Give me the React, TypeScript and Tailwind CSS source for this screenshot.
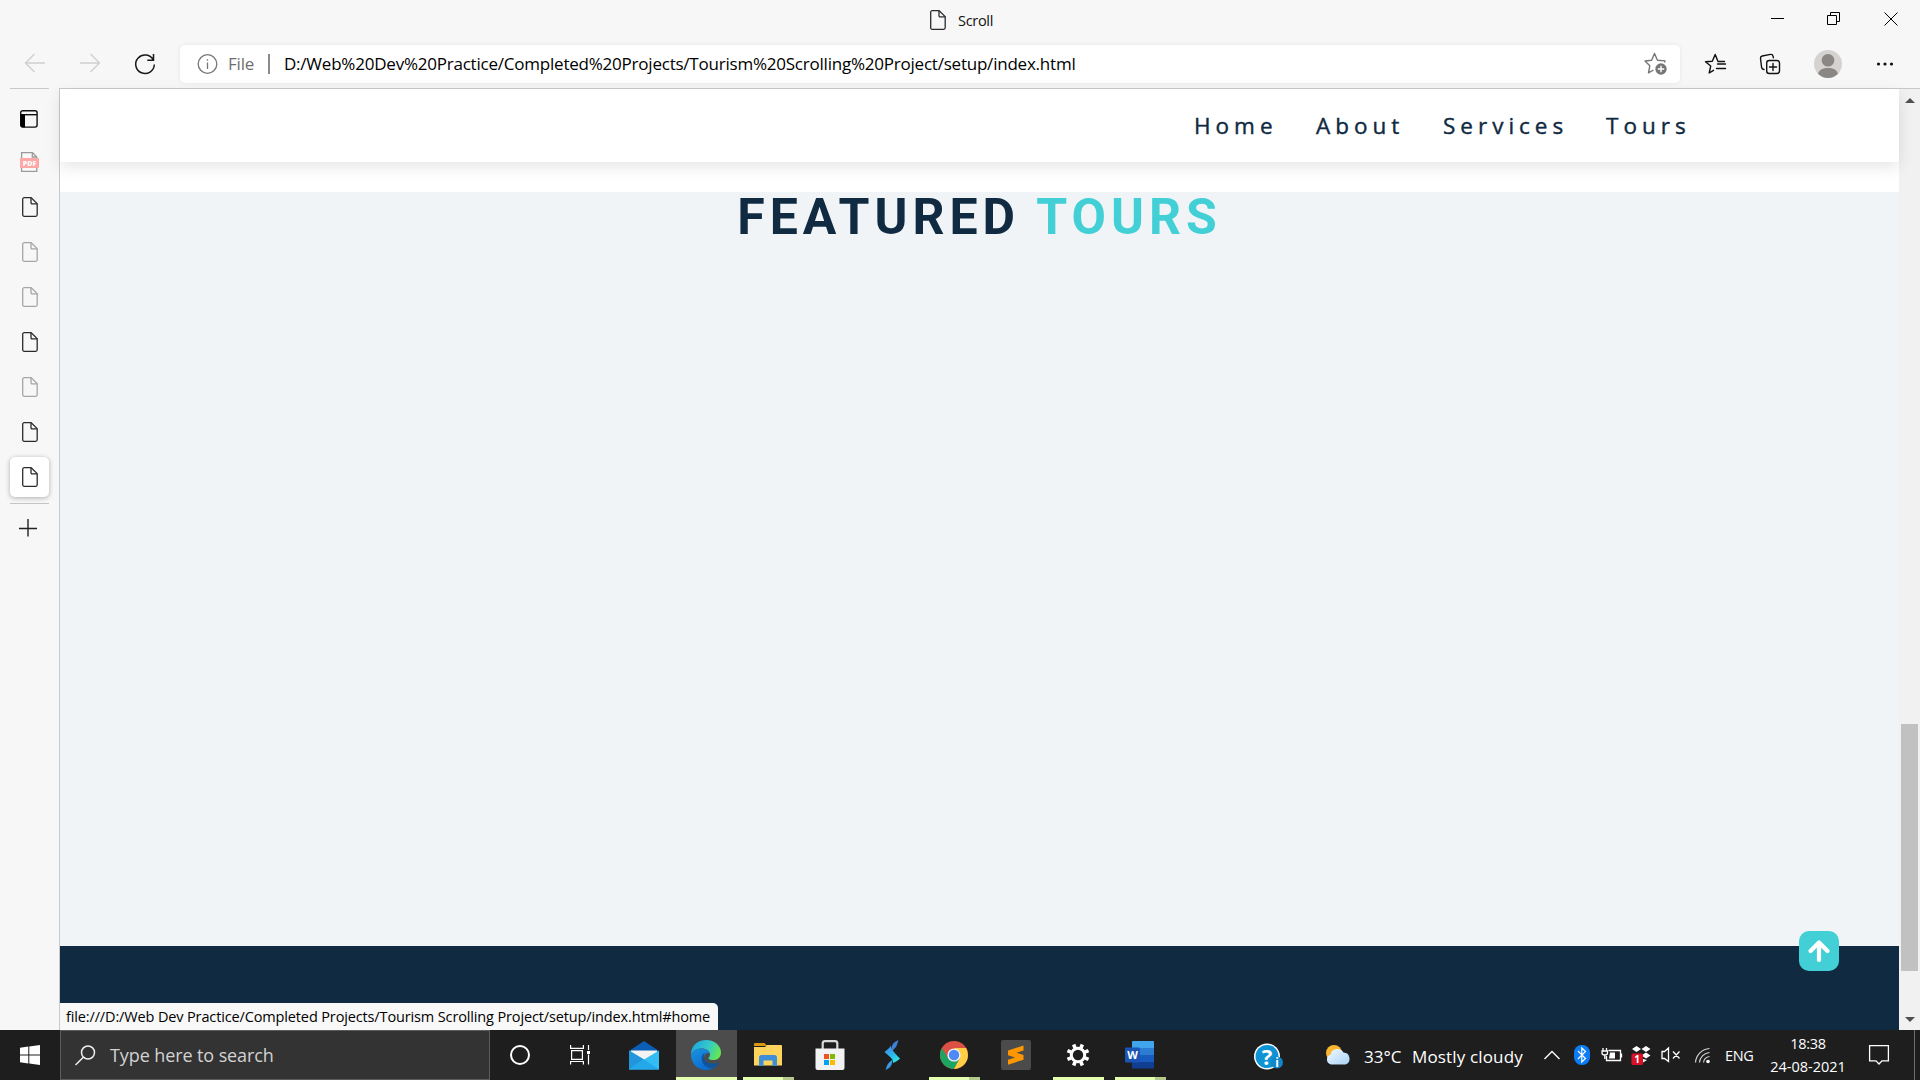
import type { ReactNode } from 'react';

function DocIcon({ faded = false, className = '' }: { faded?: boolean; className?: string }) {
  return (
    <svg className={className} width="16" height="20" viewBox="0 0 16 20" fill="none" stroke={faded ? '#a6a6a6' : '#2b2b2b'} strokeWidth="1.3" strokeLinejoin="round">
      <path d="M2.2 0.7H9.2L15.2 6.6V17.8A1.5 1.5 0 0 1 13.7 19.3H2.2A1.5 1.5 0 0 1 0.7 17.8V2.2A1.5 1.5 0 0 1 2.2 0.7Z" />
      <path d="M9 0.9V5.6A1.1 1.1 0 0 0 10.1 6.8H15.2" />
    </svg>
  );
}

function PdfIcon() {
  return (
    <svg width="19" height="20" viewBox="0 0 19 20" fill="none">
      <path d="M1.6 0.7H12.5L16.8 5V19.3H1.6Z" fill="#fafafa" stroke="#9a9a9a" strokeWidth="1.3" />
      <path d="M12.3 0.7V5H16.8" stroke="#9a9a9a" strokeWidth="1.3" />
      <rect x="0" y="6" width="19" height="10" rx="0.8" fill="#ffa6a6" />
      <text x="9.5" y="13.6" textAnchor="middle" fontFamily="Open Sans, sans-serif" fontWeight="800" fontSize="7" fill="#fff">PDF</text>
    </svg>
  );
}

function TitleBar() {
  return (
    <div className="flex h-10 items-start">
      <div className="flex h-10 w-[1754px] items-center pl-[930px]">
        <DocIcon />
        <span className="ml-[12px] mt-[2px] whitespace-nowrap text-[14.5px] tracking-[-0.3px] text-[#111]">Scroll</span>
      </div>
      <svg width="166" height="40" viewBox="1754 0 166 40" fill="none" stroke="#000">
        <path d="M1771 18.5H1784" />
        <path d="M1827.5 15.5H1836.500V24.500H1827.5Z M1830.500 15V12.500H1839.500V21.500H1837" />
        <path d="M1884.500 12.500L1897.500 25.500M1897.500 12.500L1884.500 25.500" />
      </svg>
    </div>
  );
}

function Toolbar() {
  return (
    <div className="flex h-12 items-start">
      <svg width="180" height="48" viewBox="0 40 180 48" fill="none" strokeWidth="1.3">
        <path d="M45 63H25.500M34.500 54L25.500 63L34.500 72" stroke="#cfcfcf" />
        <path d="M80 63H99.500M90.500 54L99.500 63L90.500 72" stroke="#cfcfcf" />
        <path d="M153.300 60A9.300 9.300 0 1 0 154.300 64.500M153.500 54V60.200H147.300" stroke="#1a1a1a" strokeWidth="1.5" />
      </svg>
      <div className="mt-[5px] flex h-[38px] w-[1500px] items-center rounded-[5px] bg-white shadow-[0_0_4px_rgba(0,0,0,0.08)]">
        <svg className="ml-[17px]" width="21" height="21" viewBox="0 0 21 21" fill="none" stroke="#767676" strokeWidth="1.3">
          <circle cx="10.500" cy="10" r="9.300" />
          <path d="M10.500 8.500V15M10.500 5.200V6.700" />
        </svg>
        <span className="ml-[10px] w-[40px] whitespace-nowrap text-[17px] tracking-[-0.2px] text-[#6f6f6f]">File</span>
        <div className="h-5 w-[1.5px] bg-[#8a8a8a]" />
        <span className="ml-[14.5px] w-[1360px] whitespace-nowrap text-[17px] tracking-[-0.22px] text-black">
          D:/Web%20Dev%20Practice/Completed%20Projects/Tourism%20Scrolling%20Project/setup/index.html
        </span>
        <svg width="24" height="24" viewBox="0 0 24 24" fill="none" stroke="#767676" strokeWidth="1.400" strokeLinejoin="round">
          <path d="M20.500 10.500L21 8.900L13.500 8.200L10.500 1.500L7.600 8.200L1 9L5.800 13.800L4.500 20.800L9.500 18" />
          <circle cx="17" cy="17" r="5.700" fill="#767676" stroke="none" />
          <path d="M17 13.800V20.200M13.800 17H20.200" stroke="#fff" />
        </svg>
      </div>
      <svg width="240" height="48" viewBox="1680 40 240 48" fill="none" stroke="#111" strokeWidth="1.400" strokeLinejoin="round" strokeLinecap="round">
        <path d="M1724.500 61.500H1718L1715.200 54.500L1712.300 61.200L1705.500 61.800L1710.700 66L1709.200 73L1713.500 70.300" />
        <path d="M1717.500 64H1725.500M1716.500 68.500H1725.500" />
        <rect x="1766.700" y="60.500" width="12.800" height="13" rx="2.500" />
        <path d="M1773 63.500V70.500M1769.500 67H1776.500" />
        <path d="M1764 69.500C1762.500 69.300 1761.800 68.500 1761.600 67.500L1760.500 58.500C1760.400 57.200 1761 56.300 1762.200 56L1770.500 54.400C1772 54.200 1772.800 55 1773 56L1773.400 57.700" />
        <circle cx="1828" cy="64" r="14" fill="#d5d3d0" stroke="none" />
        <ellipse cx="1828" cy="60.300" rx="6.300" ry="6.300" fill="#8b8784" stroke="none" />
        <path d="M1818 73.800C1819.500 69.500 1823 68 1828 68S1836.500 69.500 1838 73.800A14 14 0 0 1 1818 73.800Z" fill="#8b8784" stroke="none" />
        <g fill="#111" stroke="none">
          <circle cx="1878.500" cy="64" r="1.600" /><circle cx="1885" cy="64" r="1.600" /><circle cx="1891.500" cy="64" r="1.600" />
        </g>
      </svg>
    </div>
  );
}

function Sidebar() {
  return (
    <aside className="flex w-[59px] flex-col items-start">
      <div className="ml-[10px] h-px w-[39px] bg-[#c9c9c9]" />
      <div className="flex h-[51px] w-full items-center pl-[20px] pt-[9px]">
        <svg width="18" height="18" viewBox="0 0 18 18" fill="none" stroke="#111" strokeWidth="1.400">
          <rect x="0.700" y="0.700" width="16.400" height="16.400" rx="2" />
          <path d="M1 4.700H17" />
          <path d="M0.700 4.500H5V17.200H2.500A1.800 1.800 0 0 1 0.700 15.400Z" fill="#000" stroke="none" />
        </svg>
      </div>
      <div className="flex h-[44px] items-center pl-[20px]"><PdfIcon /></div>
      {[false, true, true, false, true, false].map((faded, i) => (
        <div key={i} className="flex h-[45px] items-center pl-[22px]"><DocIcon faded={faded} /></div>
      ))}
      <div className="ml-[10px] mt-[3px] flex h-10 w-[39px] items-center rounded-[5px] bg-white pl-[12px] shadow-[0_1px_5px_rgba(0,0,0,0.3)]">
        <DocIcon />
      </div>
      <div className="ml-[10px] mt-[6px] h-px w-[39px] bg-[#c4c4c4]" />
      <svg className="ml-[19px] mt-[15px]" width="18" height="18" viewBox="0 0 18 18" stroke="#222" strokeWidth="1.400">
        <path d="M9 0V17.500M0 9.5H18" />
      </svg>
    </aside>
  );
}

function Page() {
  return (
    <main className="relative flex w-[1839px] flex-col bg-white">
      <nav className="z-10 flex h-[73px] items-center bg-white pl-[1134px] text-[22.5px] tracking-[5px] text-[#102a42] shadow-[0_5px_15px_rgba(0,0,0,0.1)] [-webkit-text-stroke:0.4px_#102a42]">
        <span className="w-[122px]">Home</span>
        <span className="w-[127px]">About</span>
        <span className="w-[163px]">Services</span>
        <span>Tours</span>
      </nav>
      <section className="mt-[30px] flex h-[754px] justify-center bg-[#f0f4f7]">
        <h2 className="h-[50px] whitespace-nowrap font-['Roboto'] text-[50px] font-bold leading-[50px] tracking-[5px] text-[#102a42]">
          FEATURED <span className="text-[#42d0d6]">TOURS</span>
        </h2>
      </section>
      <footer className="flex flex-1 flex-col justify-end bg-[#102a42]">
        <div className="flex h-[27px] w-[658px] items-center rounded-tr-[5px] bg-[#f8f8f8] pl-[6px]">
          <span className="whitespace-nowrap text-[14.500px] tracking-[-0.135px] text-black">file:///D:/Web Dev Practice/Completed Projects/Tourism Scrolling Project/setup/index.html#home</span>
        </div>
      </footer>
      <button className="absolute bottom-[59px] right-[60px] z-20 flex size-10 items-center justify-center rounded-[10px] bg-[#42d0d6]">
        <svg width="24" height="24" viewBox="0 0 24 24" fill="none" stroke="#fff" strokeWidth="4.200" strokeLinejoin="round" strokeLinecap="round">
          <path d="M12 21V4M3.500 12L12 3.500L20.500 12" />
        </svg>
      </button>
    </main>
  );
}

function Scrollbar() {
  return (
    <div className="flex w-[21px] flex-col items-center justify-between bg-[#f1f1f1]">
      <svg className="mt-[9px]" width="10" height="5" viewBox="0 0 10 5"><path d="M5 0L10 5H0Z" fill="#505050" /></svg>
      <div className="mb-[46px] mt-auto h-[247px] w-[17px] bg-[#c1c1c1]" />
      <svg className="mb-[8px]" width="10" height="5" viewBox="0 0 10 5"><path d="M5 5L0 0H10Z" fill="#505050" /></svg>
    </div>
  );
}

function TaskApp({ children, bar, active = false }: { children: ReactNode; bar?: 'full' | 'split' | 'short'; active?: boolean }) {
  return (
    <div className={`flex h-[50px] w-[62px] flex-col items-center border-l border-transparent bg-clip-padding ${active ? 'bg-[#4c4c4c]' : ''}`}>
      <div className="flex h-[47px] items-center justify-center pr-[1px] pt-[3px]">{children}</div>
      {bar === 'full' && <div className="h-[3px] w-[61px] bg-[#e5ffb0]" />}
      {bar === 'short' && <div className="h-[3px] w-[51px] bg-[#e5ffb0]" />}
      {bar === 'split' && <div className="flex h-[3px] w-[51px]"><div className="w-10 bg-[#e5ffb0]" /><div className="w-[11px] bg-[#b5c98d]" /></div>}
    </div>
  );
}

function GearIcon() {
  return (
    <svg width="24" height="24" viewBox="-12 -12 24 24" fill="none" stroke="#fff">
      <circle r="6.700" strokeWidth="3" />
      {[22.5, 67.5, 112.5, 157.5, 202.5, 247.5, 292.5, 337.5].map((a) => (
        <path key={a} d="M0 -7.500V-11.400" strokeWidth="3.600" transform={`rotate(${a})`} />
      ))}
    </svg>
  );
}

function TaskApps() {
  return (
    <div className="flex">
      <div className="flex w-[60px] items-center justify-center"><div className="size-5 rounded-full border-[2.500px] border-white" /></div>
      <div className="flex w-[63px] items-center pl-5">
        <svg width="20" height="20" viewBox="0 0 20 20" fill="none" stroke="#fff" strokeWidth="1.200">
          <path d="M0.600 0V3.400H13.400V0M1.600 5.600H12.400V14.400H1.600ZM0.600 19.500V16.500H13.400V19.500M18.500 0V5M18.500 9.500V19.500" />
          <rect x="17" y="6" width="3" height="3" fill="#fff" stroke="none" />
        </svg>
      </div>
      <TaskApp>
        <svg width="30" height="29" viewBox="0 0 30 29">
          <path d="M0 10L15 0L30 10V15H0Z" fill="#0a5eb5" />
          <path d="M2 9.500H28V20H2Z" fill="#f3f3f3" />
          <path d="M0 9.500L15 18.500L30 9.500V28.500H0Z" fill="#33bdf2" />
          <path d="M0 9.500L15 18.500L0 28.500Z" fill="#2196dc" />
          <path d="M0 28.500L15 18.500L30 28.500Z" fill="#25a8ea" />
        </svg>
      </TaskApp>
      <TaskApp active bar="full">
        <svg width="30" height="30" viewBox="0 0 30 30">
          <defs>
            <linearGradient id="e1" x1="0" y1="0.300" x2="1" y2="0.600"><stop offset="0" stopColor="#1fa5e0" /><stop offset="0.550" stopColor="#35c9c8" /><stop offset="1" stopColor="#66e84a" /></linearGradient>
            <linearGradient id="e2" x1="0" y1="0" x2="0.600" y2="1"><stop offset="0" stopColor="#1b93dd" /><stop offset="1" stopColor="#0a6bd0" /></linearGradient>
          </defs>
          <path d="M0 13C1 5 7 0 15 0C24 0 30 6 30 12.500C30 17.500 26.500 20 22.500 20C19.500 20 17.500 19.300 17.500 18.200C17.500 17.300 19 16.800 19 14.200C19 11 15 8.500 10.500 8.500C6 8.500 2 10.500 0 15Z" fill="url(#e1)" />
          <path d="M0 15C1.500 10.500 5.500 8.500 10 8.500C14.500 8.500 18.800 10.800 19 14C17 12 13 13 13 18C13 24 19 27.500 24 27C21.500 29 18 30 15 30C6.500 30 0 23.500 0 15Z" fill="url(#e2)" />
          <path d="M13 13.500C10 16 10 20 12 23.500C14.500 27.500 19 29 22.500 28C25 27 27 25 27.800 23.300C28 22.800 27.500 22.500 27 22.700C22.500 24.500 14.500 24 13 18C12.600 16 13 14.500 13.800 13Z" fill="#11549e" />
        </svg>
      </TaskApp>
      <TaskApp bar="split">
        <svg width="28" height="24" viewBox="0 0 28 24">
          <path d="M0 1A1 1 0 0 1 1 0H10.500L13 3H0Z" fill="#d9980d" />
          <path d="M0 4H11L13 2H27A1 1 0 0 1 28 3V22.500H0Z" fill="#ffd45e" />
          <path d="M5 23V14.500A2.500 2.500 0 0 1 7.500 12H20.500A2.500 2.500 0 0 1 23 14.500V23H18.500V17.500H9.500V23Z" fill="#3d8fd9" />
        </svg>
      </TaskApp>
      <TaskApp>
        <svg width="30" height="30" viewBox="0 0 30 30">
          <path d="M7.700 9V3.200A2.200 2.200 0 0 1 9.900 1.200H20.100A2.200 2.200 0 0 1 22.300 3.200V9" fill="none" stroke="#d9d9d9" strokeWidth="2.200" />
          <path d="M0.500 8.500H29.500V28A2 2 0 0 1 27.500 30H2.500A2 2 0 0 1 0.500 28Z" fill="#f2f2f2" />
          <path d="M9 14H14V19H9Z" fill="#f25022" /><path d="M15 14H20V19H15Z" fill="#7fba00" />
          <path d="M9 20H14V25H9Z" fill="#00a4ef" /><path d="M15 20H20V25H15Z" fill="#ffb900" />
        </svg>
      </TaskApp>
      <TaskApp>
        <svg width="16" height="30" viewBox="0 0 16 30">
          <defs><linearGradient id="s1" x1="0" y1="0" x2="0.500" y2="1"><stop offset="0" stopColor="#4d7fe8" /><stop offset="0.600" stopColor="#2bb4ec" /><stop offset="1" stopColor="#2ee0e8" /></linearGradient></defs>
          <path d="M14.500 0C13 4 13 6 11.500 7.500L8 11V6C9 3 11 1.500 14.500 0Z" fill="#3f80d8" />
          <path d="M7 5.500C7.500 9 8.500 11 16 18.500C14 20.500 11 22.500 9 23C9.500 20.500 8 18.500 5 16L0.500 12C2 10.500 5.500 8.500 7 5.500Z" fill="url(#s1)" />
          <path d="M1.500 30C2.500 27 3 25 5 22.500L8.500 19.500L8 23.500C7 27 5 28.500 1.500 30Z" fill="#389ae5" />
        </svg>
      </TaskApp>
      <TaskApp bar="split">
        <svg width="28" height="28" viewBox="-14 -14 28 28">
          <circle r="14" fill="#dd5144" />
          <path d="M-12.100 -7A14 14 0 0 0 0 14L6 3.500L0 6.500L-5.800 3.300Z" fill="#1da462" />
          <path d="M12.100 -7A14 14 0 0 1 0 14L5.800 3.300V-3L0 -7Z" fill="#ffcd46" />
          <circle r="6.600" fill="#f1f1f1" /><circle r="5.200" fill="#4c8bf5" />
        </svg>
      </TaskApp>
      <TaskApp>
        <svg width="30" height="30" viewBox="0 0 30 30">
          <rect width="30" height="30" rx="2" fill="#4b4b4b" />
          <path d="M7 10.500L22.500 5.500V10.500L15.500 12.800L22.500 15V19.700L7 24.700V19.700L14 17.400L7 15.200Z" fill="#ff9800" />
        </svg>
      </TaskApp>
      <TaskApp bar="short"><GearIcon /></TaskApp>
      <TaskApp bar="split">
        <svg width="30" height="28" viewBox="0 0 30 28">
          <path d="M7 1A1 1 0 0 1 8 0H28A1 1 0 0 1 29 1V7H7Z" fill="#41a5ee" />
          <path d="M7 7H29V14H7Z" fill="#2b7cd3" /><path d="M7 14H29V21H7Z" fill="#185abd" />
          <path d="M7 21H29V26.500A1 1 0 0 1 28 27.500H8A1 1 0 0 1 7 26.500Z" fill="#103f91" />
          <rect x="0" y="6.500" width="15" height="15" rx="1.300" fill="#1a55b5" />
          <text x="7.500" y="18" textAnchor="middle" fontFamily="Open Sans, sans-serif" fontWeight="700" fontSize="11" fill="#fff">W</text>
        </svg>
      </TaskApp>
    </div>
  );
}

function Tray() {
  return (
    <div className="ml-auto flex w-[666px] items-center text-white">
      <svg className="mt-[3px] overflow-visible" width="30" height="28" viewBox="0 0 30 28">
        <circle cx="13" cy="13.500" r="13" fill="#fff" /><circle cx="13" cy="13.500" r="11.500" fill="#0f93d4" />
        <text x="13" y="21.500" textAnchor="middle" fontFamily="Open Sans, sans-serif" fontWeight="700" fontSize="22" fill="#fff">?</text>
        <circle cx="23" cy="19.500" r="6" fill="#0f86c8" />
        <text x="23" y="24" textAnchor="middle" fontFamily="Open Sans, sans-serif" fontWeight="700" fontSize="12" fill="#fff">i</text>
      </svg>
      <svg className="ml-[42px]" width="26" height="20" viewBox="0 0 26 20">
        <defs><linearGradient id="c1" x1="0" y1="0" x2="1" y2="1"><stop offset="0" stopColor="#f2f8fe" /><stop offset="1" stopColor="#a9d3f7" /></linearGradient></defs>
        <circle cx="8" cy="8" r="8" fill="#fbb52e" />
        <path d="M5 19.500A5 5 0 0 1 4.500 9.800A7 7 0 0 1 17.500 7.500A6.200 6.200 0 0 1 19.500 19.500Z" fill="url(#c1)" />
      </svg>
      <span className="ml-[12px] mt-[3px] w-[48px] whitespace-nowrap text-[17px]">33°C</span>
      <span className="mt-[3px] w-[132px] whitespace-nowrap text-[17px] tracking-[0.15px]">Mostly cloudy</span>
      <svg width="350" height="50" viewBox="1544 1030 350 50" className="-mr-[350px] shrink-0" fill="none" stroke="#fff" strokeWidth="1.300">
        <path d="M1544.500 1059L1552 1051.500L1559.500 1059" />
        <rect x="1574" y="1045" width="16" height="20" rx="7.500" fill="#0a7cf5" stroke="none" />
        <path d="M1578 1051L1585.500 1058.500L1581.800 1062V1048L1585.500 1051.500L1578 1059" strokeWidth="1.200" />
        <path d="M1608.500 1050.500H1620.500V1060.500H1606.500V1056M1621.500 1053.500V1057.500M1603 1048V1051M1606.500 1048V1051M1602 1051H1607.500V1053Q1607.500 1055 1604.800 1055Q1602 1055 1602 1053ZM1604.800 1055V1059" />
        <path d="M1610 1052.500H1615V1058.500H1609Z" fill="#fff" stroke="none" />
        <path d="M1636.500 1046L1641 1049L1636.500 1052L1632 1049ZM1646 1046L1650.500 1049L1646 1052L1641.500 1049ZM1646 1052.500L1650.500 1055.500L1646 1058.500L1641.500 1055.500ZM1643 1059L1647 1060L1643 1062.500Z" fill="#fff" stroke="none" />
        <rect x="1631.500" y="1053.500" width="11.500" height="11.500" rx="1.500" fill="#d9102a" stroke="none" />
        <text x="1637.200" y="1062.700" textAnchor="middle" fontFamily="Open Sans, sans-serif" fontWeight="700" fontSize="10" fill="#fff" stroke="none">1</text>
        <path d="M1662 1051.500H1664.500L1668.500 1048V1061.500L1664.500 1058.500H1662ZM1673 1051.500L1679.500 1058.500M1679.500 1051.500L1673 1058.500" />
        <path d="M1703.500 1062.500A7 7 0 0 1 1709.500 1056.500M1699.500 1062.500A11 11 0 0 1 1709.500 1052.500M1695.500 1062.500A15 15 0 0 1 1709.500 1048.500" stroke="#d0d0d0" strokeWidth="1.200" />
        <circle cx="1708" cy="1061.500" r="1.800" fill="#fff" stroke="none" />
        <path d="M1869.600 1045.600H1888.400V1060.900H1882L1879 1064L1876 1060.900H1869.600Z" />
      </svg>
      <span className="ml-[181px] mt-[1px] w-[43px] whitespace-nowrap text-[14.5px] tracking-[-0.3px]">ENG</span>
      <div className="flex w-[80px] flex-col items-center text-[14.500px] leading-[23px]">
        <span className="whitespace-nowrap tracking-[-0.3px]">18:38</span>
        <span className="whitespace-nowrap">24-08-2021</span>
      </div>
      <div className="ml-auto mr-[5px] h-[50px] w-px bg-[#6e6e6e]" />
    </div>
  );
}

function Taskbar() {
  return (
    <div className="flex h-[50px] bg-[#1e1e1e]">
      <div className="flex w-[60px] items-center justify-center">
        <svg width="20" height="20" viewBox="0 0 20 20" fill="#fff"><path d="M0 2.800L8.300 1.600V9.400H0ZM9.300 1.500L20 0V9.400H9.300ZM0 10.400H8.300V18.400L0 17.200ZM9.300 10.400H20V20L9.300 18.500Z" /></svg>
      </div>
      <div className="flex w-[430px] items-center border border-[#5c5c5c] bg-[#333]">
        <svg className="ml-[14px]" width="21" height="21" viewBox="0 0 21 21" fill="none" stroke="#f0f0f0" strokeWidth="1.500">
          <circle cx="13" cy="7.500" r="6.500" /><path d="M8.300 12.300L0.500 20" />
        </svg>
        <span className="ml-[14px] whitespace-nowrap text-[18px] tracking-[-0.1px] text-[#d2d2d2]">Type here to search</span>
      </div>
      <TaskApps />
      <Tray />
    </div>
  );
}

export default function App() {
  return (
    <div className="flex h-[1080px] w-[1920px] flex-col overflow-hidden bg-[#f7f7f7] font-['Open_Sans',sans-serif]">
      <TitleBar />
      <Toolbar />
      <div className="flex h-[942px]">
        <Sidebar />
        <div className="flex flex-1 border-l border-t border-[#c9c9c9]">
          <Page />
          <Scrollbar />
        </div>
      </div>
      <Taskbar />
    </div>
  );
}
